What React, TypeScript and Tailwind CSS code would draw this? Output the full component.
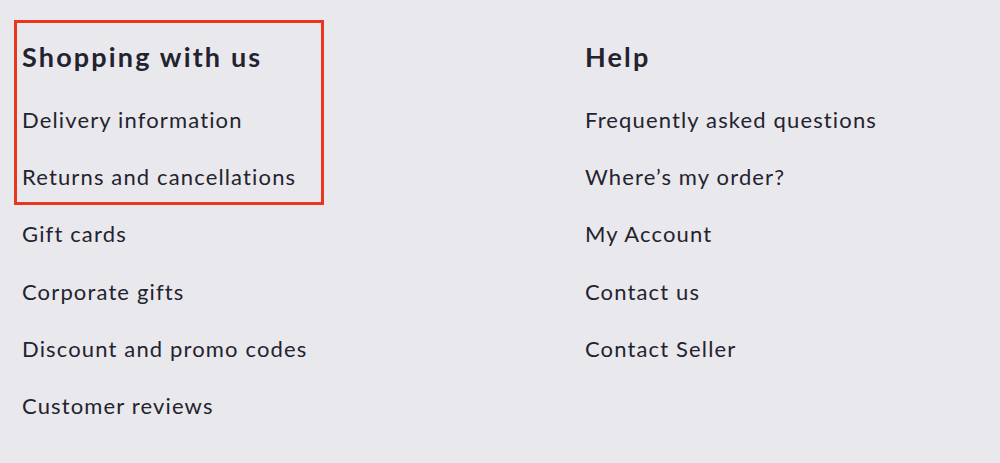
import React from "react";

const shopping = [
  "Delivery information",
  "Returns and cancellations",
  "Gift cards",
  "Corporate gifts",
  "Discount and promo codes",
  "Customer reviews",
];

const help = [
  "Frequently asked questions",
  "Where’s my order?",
  "My Account",
  "Contact us",
  "Contact Seller",
];

const LinkColumn = ({ title, links }: { title: string; links: string[] }) => {
  return (
    <div className="flex flex-col">
      <h2 className="pt-[2px] text-[27px] font-bold leading-[40px] tracking-[0.08em]">{title}</h2>
      <ul className="mt-[14px] flex flex-col">
        {links.map((label) => (
          <li key={label} className="text-[22px] leading-[57.2px] tracking-[0.052em]">
            <a href="#">{label}</a>
          </li>
        ))}
      </ul>
    </div>
  );
};

export default function App() {
  return (
    <div
      className="relative h-[463px] w-[1000px] overflow-hidden bg-[#e9e8ec] text-[#23232f]"
      style={{ fontFamily: "Lato, 'Noto Sans', sans-serif" }}
    >
      <div className="grid grid-cols-[563px_1fr] pl-[22px] pt-[35px]">
        <LinkColumn title="Shopping with us" links={shopping} />
        <LinkColumn title="Help" links={help} />
      </div>
      <div className="pointer-events-none absolute left-[14px] top-[20px] h-[185px] w-[310px] border-[3px] border-[#e8361f]" />
    </div>
  );
}
